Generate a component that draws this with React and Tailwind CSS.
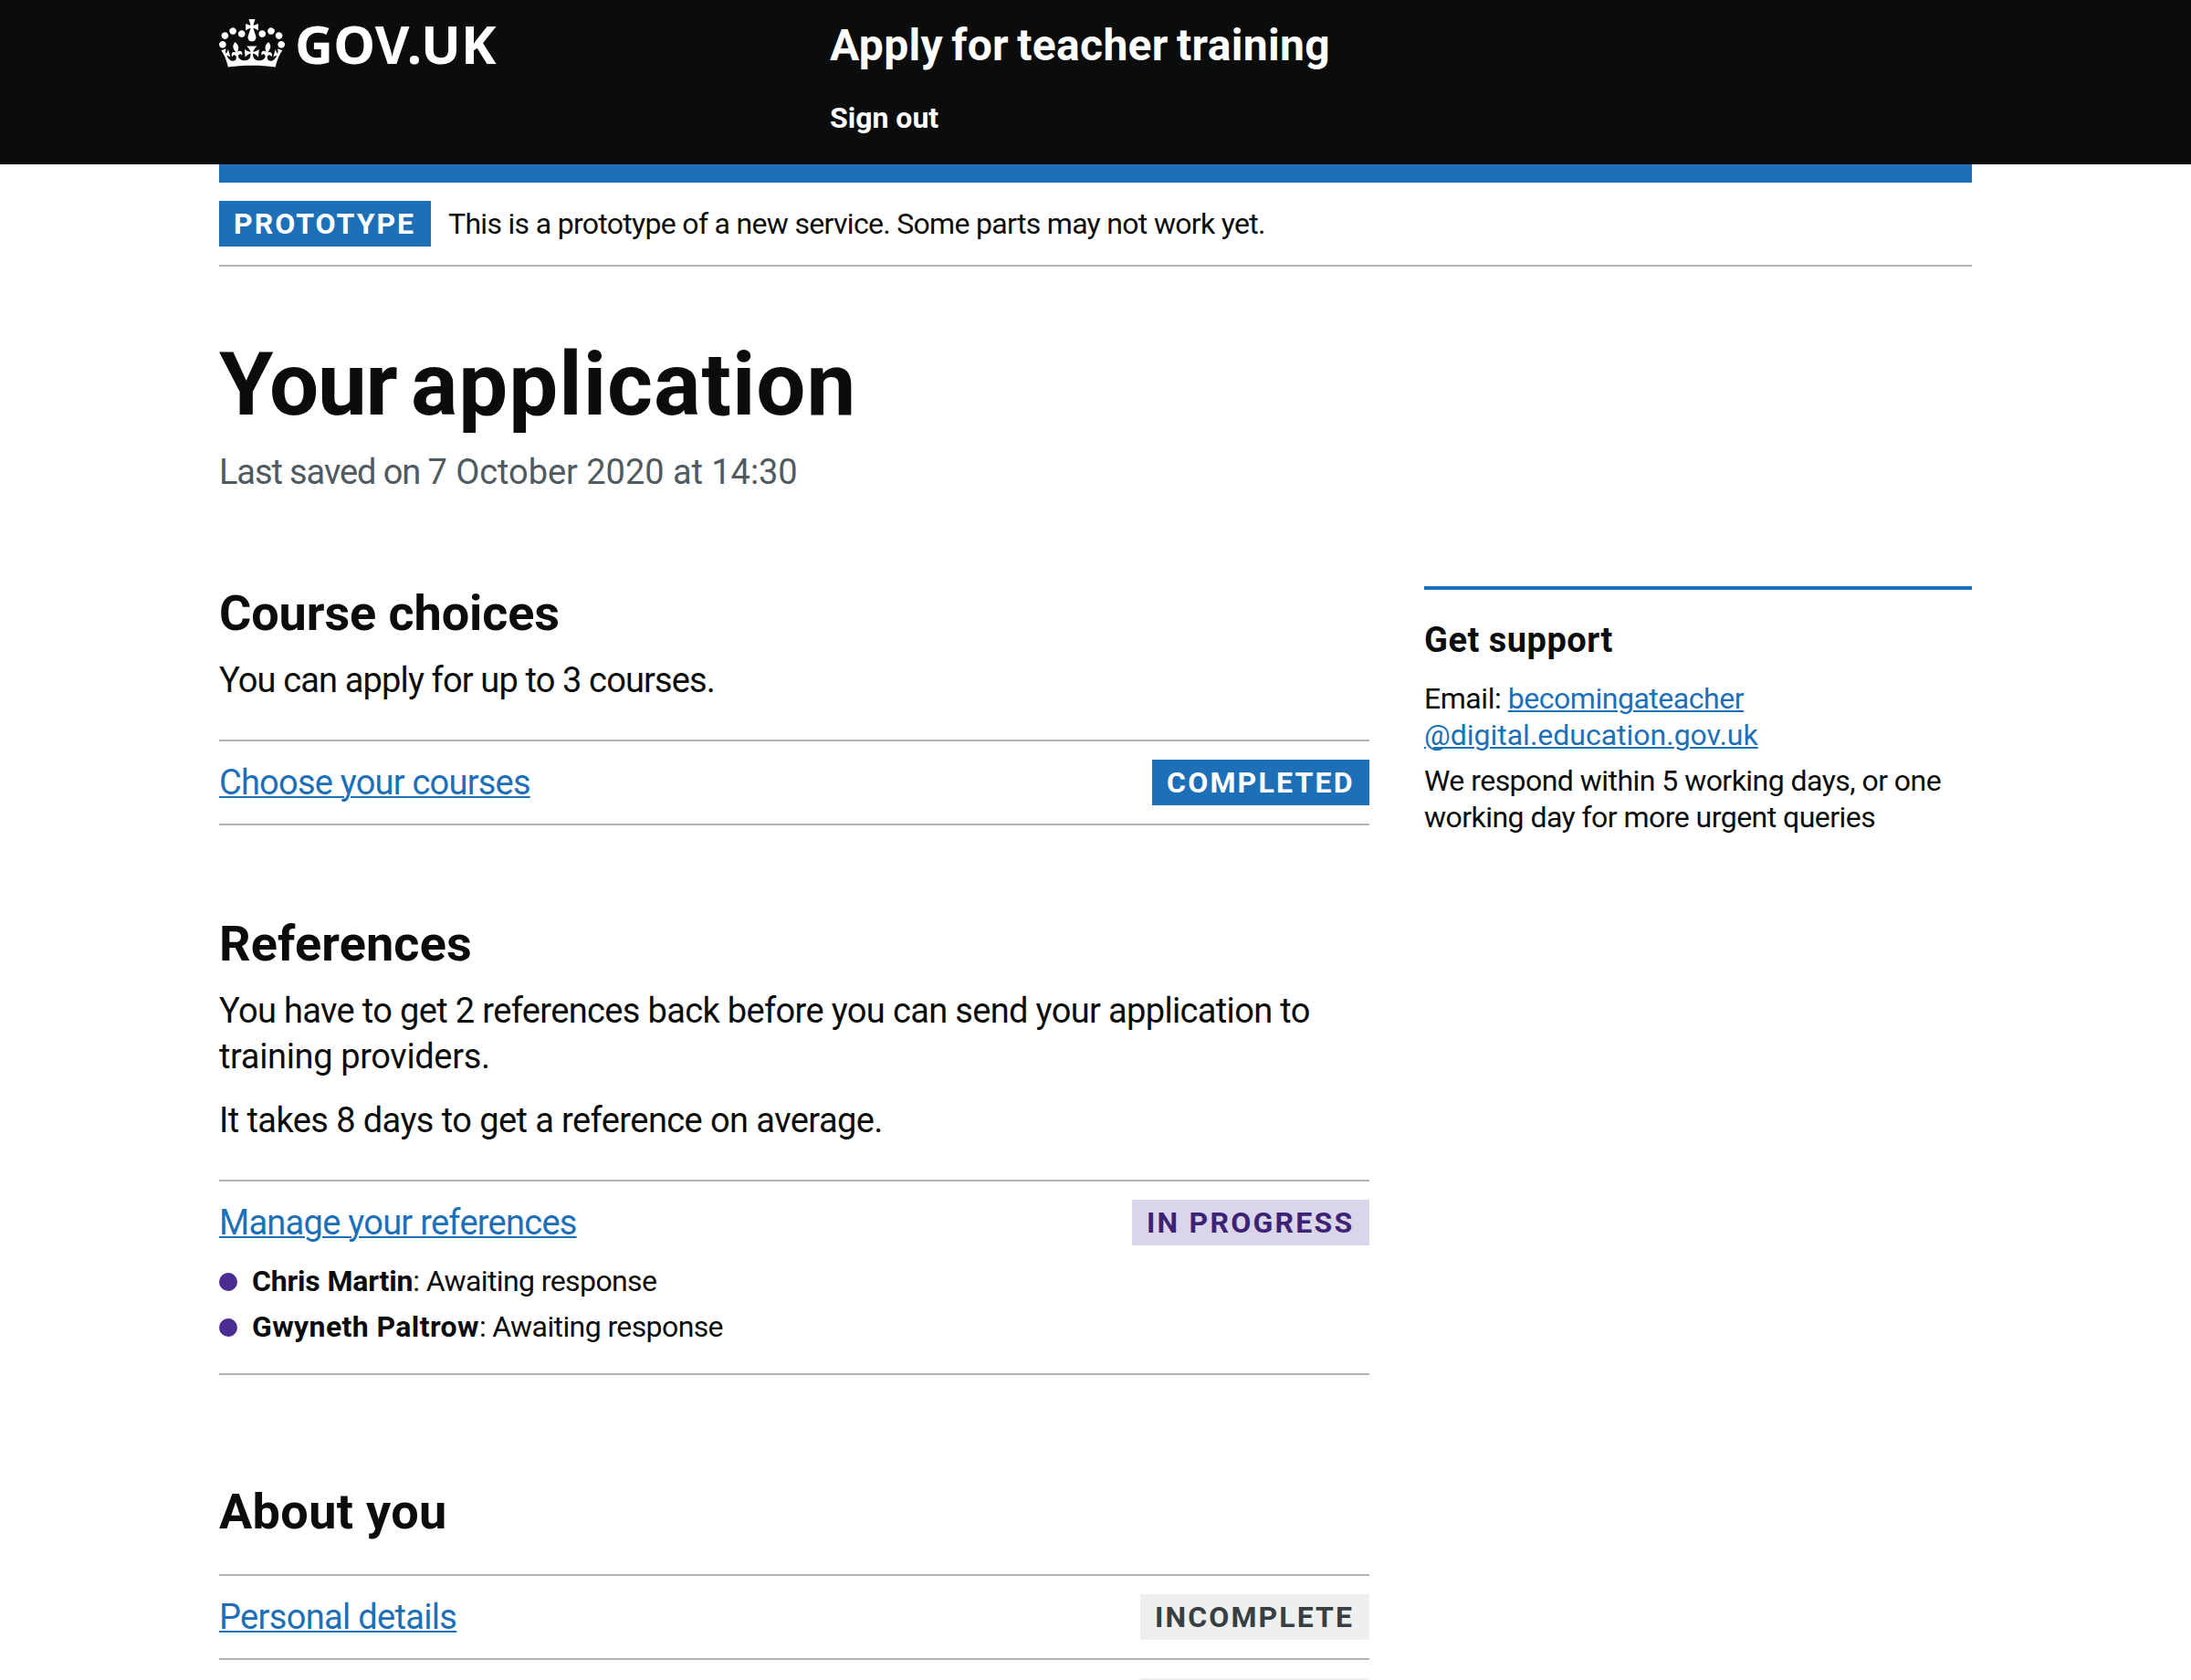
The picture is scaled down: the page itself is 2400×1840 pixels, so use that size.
import React from 'react';

function Crown() {
  return (
    <svg viewBox="0 0 132 97" className="mt-[21px] h-[53px] w-[72px] shrink-0" fill="currentColor" aria-hidden="true">
      <path
        fillRule="evenodd"
        d="M25 30.2c3.5 1.5 7.7-.2 9.1-3.7 1.5-3.6-.2-7.8-3.9-9.2-3.6-1.4-7.6.3-9.1 3.9-1.4 3.5.3 7.5 3.9 9zM9 39.5c3.6 1.5 7.8-.2 9.2-3.7 1.5-3.6-.2-7.8-3.9-9.1-3.6-1.5-7.6.2-9.1 3.8-1.4 3.5.3 7.5 3.8 9zM4.4 57.2c3.5 1.5 7.7-.2 9.1-3.8 1.5-3.6-.2-7.7-3.9-9.1-3.5-1.5-7.6.3-9.1 3.8-1.4 3.5.3 7.6 3.9 9.1zm38.3-21.4c3.5 1.5 7.7-.2 9.1-3.8 1.5-3.6-.2-7.7-3.9-9.1-3.6-1.5-7.6.3-9.1 3.8-1.3 3.6.4 7.7 3.9 9.1zm64.4-5.6c-3.6 1.5-7.8-.2-9.1-3.7-1.5-3.6.2-7.8 3.8-9.2 3.6-1.4 7.7.3 9.2 3.9 1.3 3.5-.4 7.5-3.9 9zm15.9 9.3c-3.6 1.5-7.7-.2-9.1-3.7-1.5-3.6.2-7.8 3.7-9.1 3.6-1.5 7.7.2 9.2 3.8 1.5 3.5-.3 7.5-3.8 9zm4.7 17.7c-3.6 1.5-7.8-.2-9.2-3.8-1.5-3.6.2-7.7 3.9-9.1 3.6-1.5 7.7.3 9.2 3.8 1.3 3.5-.4 7.6-3.9 9.1zM89.3 35.8c-3.6 1.5-7.8-.2-9.2-3.8-1.4-3.6.2-7.7 3.9-9.1 3.6-1.5 7.7.3 9.2 3.8 1.4 3.6-.3 7.7-3.9 9.1zM69.7 17.7l8.9 4.7V9.3l-8.9 2.8c-.2-.3-.5-.6-.9-.9L72.4 0H59.6l3.5 11.2c-.3.3-.6.5-.9.9l-8.8-2.8v13.1l8.8-4.7c.3.3.6.7.9.9l-5 15.4v.1c-.2.8-.4 1.6-.4 2.4 0 4.1 3.1 7.5 7 8.1h.2c.3 0 .7.1 1 .1.4 0 .7 0 1-.1h.2c4-.6 7.1-4.1 7.1-8.1 0-.8-.1-1.7-.4-2.4V34l-5.1-15.4c.4-.2.7-.6 1-.9zM66 92.8c16.9 0 32.8 1.1 47.1 3.2 4-16.9 8.9-26.7 14-33.5l-9.6-3.4c1 4.9 1.1 7.2 0 10.2-1.5-1.4-3-4.3-4.2-8.7L108.6 76c2.8-2 5-3.2 7.5-3.3-4.4 9.4-10 11.9-13.6 11.2-4.3-.8-6.3-4.6-5.6-7.9 1-4.7 5.7-5.9 8-.5 4.3-8.7-3-11.4-7.6-8.8 7.1-7.2 7.9-13.5 2.1-21.1-8 6.1-8.1 12.3-4.5 20.8-4.7-5.4-12.1-2.5-9.5 6.2 3.4-5.2 7.9-2 7.2 3.1-.6 4.3-6.4 7.8-13.5 7.2-10.3-.9-10.9-8-11.2-13.8 2.5-.5 7.1 1.8 11 7.3L80.2 60c-4.1 4.4-8 5.3-12.3 5.4 1.4-4.4 8-11.6 8-11.6H55.5s6.4 7.2 7.9 11.6c-4.2-.1-8-1-12.3-5.4l1.4 16.4c3.9-5.5 8.5-7.7 10.9-7.3-.3 5.8-.9 12.8-11.1 13.8-7.2.6-12.9-2.9-13.5-7.2-.7-5 3.8-8.3 7.1-3.1 2.7-8.7-4.6-11.6-9.4-6.2 3.7-8.5 3.6-14.7-4.6-20.8-5.8 7.6-5 13.9 2.2 21.1-4.7-2.6-11.9.1-7.7 8.8 2.3-5.5 7.1-4.2 8.1.5.7 3.3-1.3 7.1-5.7 7.9-3.5.7-9-1.8-13.5-11.2 2.5.1 4.7 1.3 7.5 3.3l-4.7-15.4c-1.2 4.4-2.7 7.2-4.3 8.7-1.1-3-.9-5.3 0-10.2l-9.5 3.4c5 6.9 9.9 16.7 14 33.5 14.8-2.1 30.8-3.2 47.7-3.2z"
      />
    </svg>
  );
}

function Tag({ className, children }) {
  return (
    <strong className={`block h-[50px] shrink-0 whitespace-nowrap pl-4 text-[32px] font-bold leading-[50px] ${className}`}>
      {children}
    </strong>
  );
}

function Link({ className = '', children }) {
  return (
    <a href="#" className={`text-[#1d70b8] underline decoration-2 underline-offset-2 ${className}`}>
      {children}
    </a>
  );
}

function Heading({ className = '', children }) {
  return <h2 className={`text-[54px] font-bold leading-[60px] ${className}`}>{children}</h2>;
}

function Task({ label, labelClass, tag, tagClass, children }) {
  return (
    <li className="border-b-2 border-[#b1b4b6] py-5">
      <div className="flex h-[50px] justify-between">
        <Link className={`whitespace-nowrap text-[38px] leading-[50px] ${labelClass}`}>{label}</Link>
        <Tag className={tagClass}>{tag}</Tag>
      </div>
      {children}
    </li>
  );
}

function Reference({ name, nameClass }) {
  return (
    <li className="flex h-[50px] items-center whitespace-nowrap text-[32px] leading-[50px]">
      <span className="mr-4 mt-[2px] size-5 rounded-full bg-[#4c2c92]" />
      <strong className={`font-bold ${nameClass}`}>{name}</strong>
      <span className="tracking-[-0.6px]">: Awaiting response</span>
    </li>
  );
}

export default function App() {
  return (
    <div className="h-[1840px] w-[2400px] overflow-hidden bg-white font-['Roboto',sans-serif] text-[#0b0c0c]">
      <header className="h-[180px] bg-[#0b0c0c] px-[240px] text-white">
        <div className="flex">
          <a href="#" className="flex w-[669px] shrink-0">
            <Crown />
            <span className="ml-[11px] mt-[18px] font-['Noto_Sans',sans-serif] text-[58px] font-bold leading-[60px] tracking-[0.2px]">GOV.UK</span>
          </a>
          <div className="pt-5">
            <a href="#" className="block text-[48px] font-bold leading-[60px] tracking-[0.32px] [word-spacing:-3px]">
              Apply for teacher training
            </a>
            <a href="#" className="mt-[29px] block text-[32px] font-bold leading-[40px]">Sign out</a>
          </div>
        </div>
      </header>

      <div className="px-[240px]">
        <div className="h-5 bg-[#1d70b8]" />
        <div className="flex gap-[19px] border-b-2 border-[#b1b4b6] py-5">
          <Tag className="w-[232px] bg-[#1d70b8] tracking-[2px] text-white">PROTOTYPE</Tag>
          <span className="whitespace-nowrap text-[32px] leading-[50px] tracking-[-0.69px]">
            This is a prototype of a new service. Some parts may not work yet.
          </span>
        </div>

        <h1 className="mt-[79px] text-[96px] font-bold leading-[100px]">
          <span className="tracking-[-1.3px] [word-spacing:-7px]">Your </span>
          <span className="tracking-[1px]">application</span>
        </h1>
        <p className="mt-[21px] text-[38px] leading-[50px] text-[#505a5f]">
          <span className="tracking-[-1.1px]">Last saved on </span>
          <span className="tracking-[-0.05px]">7 October 2020 at 14:30</span>
        </p>

        <div className="mt-[100px] flex justify-between">
          <main className="w-[1260px]">
            <Heading className="tracking-[-0.1px]">Course choices</Heading>
            <p className="mt-[18px] text-[38px] leading-[50px] tracking-[-0.86px]">You can apply for up to 3 courses.</p>
            <ul className="mt-10 border-t-2 border-[#b1b4b6]">
              <Task
                label="Choose your courses"
                labelClass="tracking-[-0.78px]"
                tag="COMPLETED"
                tagClass="w-[238px] bg-[#1d70b8] tracking-[2.2px] text-white"
              />
            </ul>

            <Heading className="mt-[100px] tracking-[0.15px]">References</Heading>
            <p className="mt-[18px] text-[38px] leading-[50px] tracking-[-0.65px]">
              You have to get 2 references back before you can send your application to{' '}
              <br />
              <span className="tracking-[-0.36px]">training providers.</span>
            </p>
            <p className="mt-5 text-[38px] leading-[50px] tracking-[-0.58px]">
              It takes 8 days to get a reference on average.
            </p>
            <ul className="mt-10 border-t-2 border-[#b1b4b6]">
              <Task
                label="Manage your references"
                labelClass="tracking-[-0.74px]"
                tag="IN PROGRESS"
                tagClass="w-[260px] bg-[#dbd5e9] tracking-[2.24px] text-[#3d2375]"
              >
                <ul className="mb-[6px] mt-[14px]">
                  <Reference name="Chris Martin" nameClass="tracking-[-0.17px]" />
                  <Reference name="Gwyneth Paltrow" nameClass="tracking-[0.39px]" />
                </ul>
              </Task>
            </ul>

            <Heading className="mt-[120px] tracking-[0.33px]">About you</Heading>
            <ul className="mt-[38px] border-t-2 border-[#b1b4b6]">
              <Task
                label="Personal details"
                labelClass="tracking-[-0.68px]"
                tag="INCOMPLETE"
                tagClass="w-[251px] bg-[#eeefef] tracking-[2.11px] text-[#383f43]"
              />
              <Task label="" labelClass="" tag="" tagClass="w-[251px] bg-[#eeefef]" />
            </ul>
          </main>

          <aside className="w-[600px] border-t-4 border-[#1d70b8]">
            <h2 className="mt-[30px] text-[38px] font-bold leading-[50px] tracking-[0.5px]">Get support</h2>
            <p className="mt-[19px] text-[32px] leading-[40px] tracking-[-0.45px]">
              Email: <Link className="tracking-[-0.47px]">becomingateacher</Link>
              <br />
              <Link className="tracking-[-0.01px]">@digital.education.gov.uk</Link>
            </p>
            <p className="mt-[10px] text-[32px] leading-[40px] tracking-[-0.54px]">
              We respond within 5 working days, or one
              <br />
              working day for more urgent queries
            </p>
          </aside>
        </div>
      </div>
    </div>
  );
}
